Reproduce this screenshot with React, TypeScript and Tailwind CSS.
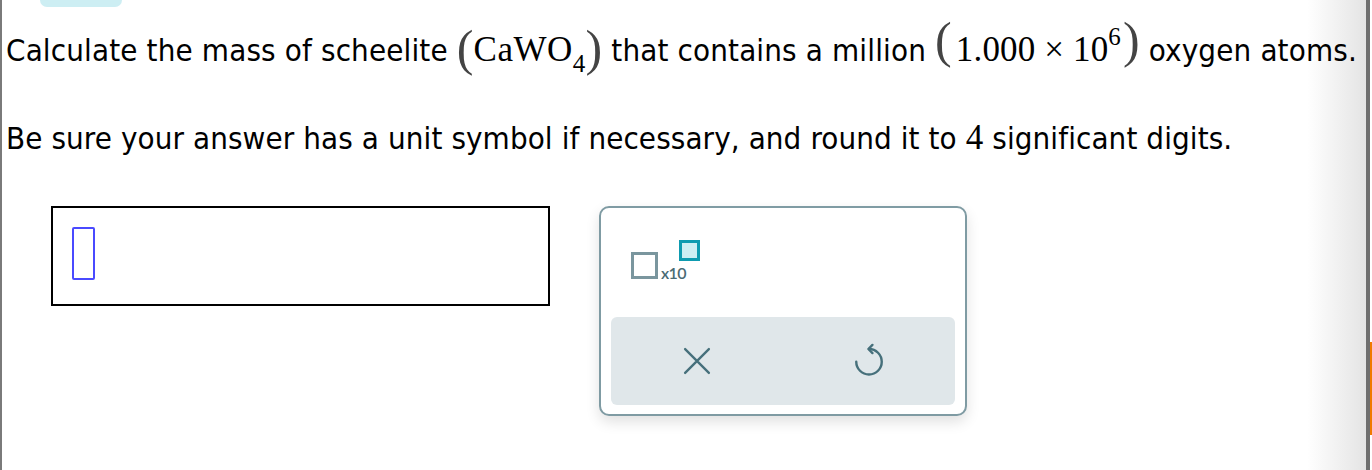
import React from "react";

const sans = "font-['DejaVu_Sans_Condensed','DejaVu_Sans',sans-serif] [font-stretch:condensed]";
const serif = "font-['Liberation_Serif',serif]";

function X10Widget() {
  return (
    <div className="flex items-start ml-[30px] mt-[32px]">
      <div className="w-[27px] h-[27px] border-[3px] border-[#7a969e] mt-[12px]" />
      <span className="font-['Lato',sans-serif] font-semibold text-[16px] leading-none text-[#4a6b74] mt-[25px] ml-[3px] tracking-[-0.6px]">x10</span>
      <div className="w-[21px] h-[21px] border-[3px] border-[#0e9bb0] bg-[#cdeef3] -ml-[7px]" />
    </div>
  );
}

function UndoIcon() {
  return (
    <svg width="36" height="36" viewBox="0 0 24 24" fill="none" stroke="#46707b" strokeWidth="1.6" strokeLinecap="round" strokeLinejoin="round">
      <path d="M12 4a8.5 8.5 0 1 1-8.5 8.5" />
      <path d="M14.3 1.3L11.6 4l2.7 2.7" />
    </svg>
  );
}

function XIcon() {
  return (
    <svg width="30" height="30" viewBox="0 0 24 24" fill="none" stroke="#46707b" strokeWidth="1.9" strokeLinecap="round">
      <path d="M2.5 2.5l19 19M21.5 2.5l-19 19" />
    </svg>
  );
}

export default function App() {
  return (
    <div className="w-[1372px] h-[470px] bg-white flex overflow-hidden">
      <div className="w-[2px] bg-[#7a7a7a]" />
      <div className="flex-1 bg-[linear-gradient(to_right,#ffffff_1305px,#e4e4e4)] flex flex-col">
        <div className="ml-[38px] w-[82px] h-[7px] rounded-b-[12px] bg-[#cdeef3]" />
        <div className={`${sans} text-[31px] text-black whitespace-nowrap ml-[4px] mt-[12px] leading-[38px] tracking-[0.15px]`}>
          Calculate the mass of scheelite{" "}
          <span className={`${serif} inline-flex items-baseline`}>
            <span className="text-[50px] font-light text-[#444] relative top-[4px] leading-none">(</span>
            <span className="text-[35px] tracking-[0.5px]">CaWO</span>
            <span className="text-[25px] relative top-[11px]">4</span>
            <span className="text-[50px] font-light text-[#444] relative top-[4px] leading-none">)</span>
          </span>{" "}
          that contains a million{" "}
          <span className={`${serif} inline-flex items-baseline`}>
            <span className="text-[50px] text-[#444] relative -top-[4px] leading-none">(</span>
            <span className="text-[35px] ml-[4px]">1.000 × 10</span>
            <span className="text-[25px] relative -top-[16px]">6</span>
            <span className="text-[50px] text-[#444] relative -top-[4px] leading-none ml-[2px]">)</span>
          </span>{" "}
          oxygen atoms.
        </div>
        <div className={`${sans} text-[31px] text-black whitespace-nowrap ml-[4px] mt-[47px] leading-[38px] tracking-[0.1px]`}>
          Be sure your answer has a unit symbol if necessary, and round it to{" "}
          <span className={`${serif} text-[35px]`}>4</span> significant digits.
        </div>
        <div className="flex items-start mt-[49px] ml-[49px]">
          <div className="w-[499px] h-[100px] border-2 border-black pl-[19px] pt-[19px]">
            <div className="w-[23px] h-[53px] border-2 border-[#4a4aff] rounded-[2px]" />
          </div>
          <div className="ml-[49px] w-[368px] h-[210px] border-2 border-[#7f9ba3] rounded-[10px] shadow-[0_6px_14px_rgba(0,0,0,0.12)] bg-white flex flex-col">
            <X10Widget />
            <div className="mt-auto mx-[10px] mb-[9px] h-[88px] rounded-[6px] bg-[#e0e7ea] grid grid-cols-2">
              <div className="flex items-center justify-center"><XIcon /></div>
              <div className="flex items-center justify-center"><UndoIcon /></div>
            </div>
          </div>
        </div>
      </div>
      <div className="w-[4px] bg-[#6f6f6f]" />
      <div className="w-[2px] flex flex-col">
        <div className="mt-[342px] h-[93px] bg-[#f07a00]" />
      </div>
    </div>
  );
}
